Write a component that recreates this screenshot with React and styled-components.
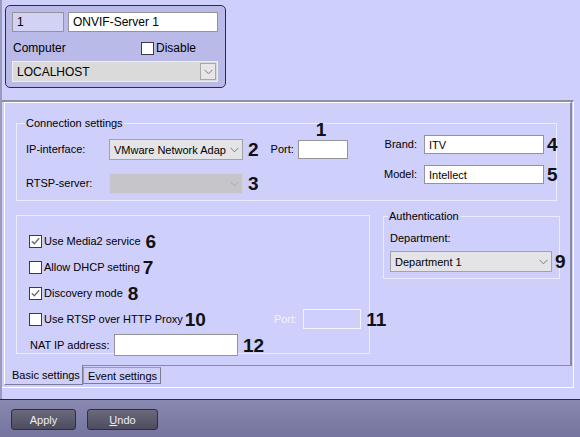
import React from "react";
import styled, { createGlobalStyle } from "styled-components";

const GlobalStyle = createGlobalStyle`
  html, body { margin: 0; padding: 0; }
  body {
    background: #cfcffb;
    font-family: "Liberation Sans", Arial, sans-serif;
    font-size: 11px;
    color: #000;
  }
  * { box-sizing: border-box; }
`;

const Screen = styled.div`
  width: 580px;
  height: 437px;
  display: flex;
  flex-direction: column;
  overflow: hidden;
`;

const Upper = styled.div`
  flex: 1;
  border-left: 2px solid #9a9abc;
`;

const Header = styled.div`
  height: 100px;
  padding: 5px 0 0 3px;
`;

const ObjectPanel = styled.div`
  width: 221px;
  height: 83px;
  border: 1px solid #2c2c44;
  border-radius: 5px;
  background: #babae8;
  padding: 6px 0 0 6px;
`;

const Row = styled.div`
  display: flex;
  align-items: center;
  height: ${(p) => p.h || 21}px;
  margin-top: ${(p) => p.mt || 0}px;
  flex: none;
`;

const TextBox = styled.div`
  flex: none;
  width: ${(p) => p.w}px;
  height: ${(p) => p.h || 19}px;
  margin-left: ${(p) => p.ml || 0}px;
  background: ${(p) => (p.tint ? "#d2d2f4" : p.off ? "transparent" : "#fff")};
  border: 1px solid ${(p) => (p.off ? "#f4f4ff" : "#949498")};
  padding: 0 4px;
  display: flex;
  align-items: center;
  white-space: nowrap;
  overflow: hidden;
  font-size: ${(p) => (p.big ? 12 : 11)}px;
`;

const Label = styled.div`
  flex: none;
  width: ${(p) => (p.w ? `${p.w}px` : "auto")};
  margin-left: ${(p) => p.ml || 0}px;
  text-align: ${(p) => (p.right ? "right" : "left")};
  white-space: nowrap;
  line-height: 13px;
  font-size: ${(p) => (p.big ? 12 : 11)}px;
  color: ${(p) => (p.off ? "#f2f2fc" : "#000")};
`;

const Num = styled.div`
  flex: none;
  margin-left: ${(p) => p.ml || 0}px;
  font-size: 19px;
  font-weight: bold;
  line-height: 19px;
  color: #111;
`;

const FloatNum = styled(Num)`
  position: absolute;
  top: -20px;
  left: 18px;
`;

const Anchor = styled.div`
  position: relative;
  flex: none;
  margin-left: ${(p) => p.ml || 0}px;
`;

const ComboBox = styled.div`
  flex: none;
  width: ${(p) => p.w}px;
  height: 21px;
  margin-left: ${(p) => p.ml || 0}px;
  background: ${(p) => (p.off ? "#c6c6ca" : p.host ? "#dadada" : "#e4e4e6")};
  border: 1px solid ${(p) => (p.off ? "#d2d2d6" : p.host ? "#eeeeee" : "#a2a2a6")};
  display: flex;
  align-items: center;
  padding-left: 4px;
  white-space: nowrap;
  font-size: ${(p) => (p.host ? 12 : 11)}px;
`;

const ComboText = styled.div`
  flex: 1;
  overflow: hidden;
`;

const DropButton = styled.div`
  flex: none;
  width: ${(p) => (p.boxed ? 16 : 14)}px;
  height: ${(p) => (p.boxed ? 17 : 19)}px;
  margin-right: 1px;
  display: flex;
  align-items: center;
  justify-content: center;
  background: ${(p) => (p.boxed ? "#e6e6e6" : "transparent")};
  border: ${(p) => (p.boxed ? "1px solid #a8a8a8" : "none")};
`;

function Chevron({ color = "#7a7a7a" }) {
  return (
    <svg width="9" height="6" viewBox="0 0 9 6">
      <polyline points="0.5,0.8 4.5,4.8 8.5,0.8" fill="none" stroke={color} strokeWidth="1" />
    </svg>
  );
}

function Combo({ children, w, ml, off, host }) {
  return (
    <ComboBox w={w} ml={ml} off={off} host={host}>
      <ComboText>{children}</ComboText>
      <DropButton boxed={host}>
        <Chevron color={off ? "#a8a8ac" : "#7a7a7a"} />
      </DropButton>
    </ComboBox>
  );
}

const Box = styled.div`
  flex: none;
  width: 13px;
  height: 13px;
  background: #fff;
  border: 1px solid #3a3a48;
  margin-right: ${(p) => p.mr || 2}px;
  display: flex;
  align-items: center;
  justify-content: center;
`;

function Check({ on, mr }) {
  return (
    <Box mr={mr}>
      {on && (
        <svg width="11" height="11" viewBox="0 0 11 11">
          <polyline points="1.8,5.2 4.3,7.8 9.2,2.2" fill="none" stroke="#6e6e76" strokeWidth="1.4" />
        </svg>
      )}
    </Box>
  );
}

const Frame = styled.div`
  width: 572px;
  height: 288px;
  border-top: 2px solid #8e8eaa;
  border-right: 1px solid #fff;
  border-bottom: 1px solid #fff;
  padding-left: 2px;
  display: flex;
  flex-direction: column;
`;

const TabPage = styled.div`
  width: 568px;
  height: 264px;
  flex: none;
  border-top: 1px solid #fff;
  border-left: 1px solid #fff;
  border-right: 2px solid #8a8aa2;
  border-bottom: 1px solid #8a8aa2;
  padding: 20px 0 0 11px;
`;

const Group = styled.div`
  position: relative;
  flex: none;
  width: ${(p) => p.w}px;
  height: ${(p) => p.h}px;
  margin-top: ${(p) => p.mt || 0}px;
  margin-left: ${(p) => p.ml || 0}px;
  border: 1px solid #ececff;
  padding: ${(p) => p.pad};
  display: flex;
  flex-direction: ${(p) => (p.col ? "column" : "row")};
`;

const GroupTitle = styled.div`
  position: absolute;
  top: -7px;
  left: ${(p) => p.left}px;
  padding: 0 1px;
  line-height: 13px;
  background: #cfcffb;
  white-space: nowrap;
`;

const Column = styled.div`
  flex: none;
  display: flex;
  flex-direction: column;
  width: ${(p) => (p.w ? `${p.w}px` : "auto")};
  margin-left: ${(p) => p.ml || 0}px;
`;

const BottomRow = styled.div`
  display: flex;
  align-items: flex-start;
  margin-top: 14px;
`;

const CheckRow = styled.div`
  display: flex;
  align-items: center;
  height: 26px;
  flex: none;
`;

const TabStrip = styled.div`
  display: flex;
  align-items: flex-start;
  height: 21px;
`;

const Tab = styled.div`
  flex: none;
  width: ${(p) => p.w}px;
  height: ${(p) => (p.active ? 20 : 17)}px;
  margin-top: ${(p) => (p.active ? -1 : 1)}px;
  background: #cfcffb;
  border-left: 1px solid ${(p) => (p.active ? "#fff" : "#9a9ab4")};
  border-right: 1px solid #7c7c94;
  border-bottom: 1px solid #7c7c94;
  border-top: ${(p) => (p.active ? "none" : "1px solid #9a9ab4")};
  padding-left: ${(p) => (p.active ? 7 : 4)}px;
  display: flex;
  align-items: center;
  white-space: nowrap;
`;

const BottomBar = styled.div`
  flex: none;
  height: 38px;
  border-top: 1px solid #2a2a3a;
  background: linear-gradient(#8888b0, #74749e);
  display: flex;
  gap: 11px;
  padding: 9px 0 0 11px;
`;

const Button = styled.button`
  width: ${(p) => p.w}px;
  height: 21px;
  border: 1px solid #2e2e3e;
  border-radius: 3px;
  background: linear-gradient(#6a6a7c, #4c4c5e);
  color: #eeeef6;
  font-family: "Liberation Sans", Arial, sans-serif;
  font-size: 11px;
  padding: 0;
  u { text-decoration: underline; }
`;

export default function App() {
  return (
    <Screen>
      <GlobalStyle />
      <Upper>
        <Header>
          <ObjectPanel>
            <Row h={20}>
              <TextBox w={52} h={20} tint big>1</TextBox>
              <TextBox w={150} h={20} ml={4} big>ONVIF-Server 1</TextBox>
            </Row>
            <Row h={13} mt={10}>
              <Label w={128} ml={1} big>Computer</Label>
              <Check />
              <Label big>Disable</Label>
            </Row>
            <Row mt={6}>
              <Combo w={206} host>LOCALHOST</Combo>
            </Row>
          </ObjectPanel>
        </Header>

        <Frame>
          <TabPage>
            <Group w={541} h={78} pad="0 0 0 9px">
              <GroupTitle left={8}>Connection settings</GroupTitle>
              <Column w={323}>
                <Row mt={15}>
                  <Label w={83}>IP-interface:</Label>
                  <Combo w={134}>VMware Network Adap</Combo>
                  <Num ml={5}>2</Num>
                  <Label ml={12}>Port:</Label>
                  <Anchor ml={4}>
                    <FloatNum>1</FloatNum>
                    <TextBox w={50} />
                  </Anchor>
                </Row>
                <Row mt={13}>
                  <Label w={83}>RTSP-server:</Label>
                  <Combo w={134} off />
                  <Num ml={5}>3</Num>
                </Row>
              </Column>
              <Column ml={34}>
                <Row h={19} mt={11}>
                  <Label w={34} right>Brand:</Label>
                  <TextBox w={120} ml={7}>ITV</TextBox>
                  <Num ml={3}>4</Num>
                </Row>
                <Row h={19} mt={11}>
                  <Label w={34} right>Model:</Label>
                  <TextBox w={120} ml={7}>Intellect</TextBox>
                  <Num ml={3}>5</Num>
                </Row>
              </Column>
            </Group>

            <BottomRow>
              <Group w={354} h={139} pad="12px 0 0 12px" col>
                <CheckRow>
                  <Check on />
                  <Label>Use Media2 service</Label>
                  <Num ml={5}>6</Num>
                </CheckRow>
                <CheckRow>
                  <Check />
                  <Label>Allow DHCP setting</Label>
                  <Num ml={3}>7</Num>
                </CheckRow>
                <CheckRow>
                  <Check on />
                  <Label>Discovery mode</Label>
                  <Num ml={5}>8</Num>
                </CheckRow>
                <CheckRow>
                  <Check />
                  <Label>Use RTSP over HTTP Proxy</Label>
                  <Num ml={2}>10</Num>
                  <Label off ml={68}>Port:</Label>
                  <TextBox w={58} h={20} ml={6} off />
                  <Num ml={5}>11</Num>
                </CheckRow>
                <CheckRow>
                  <Label w={84} ml={1}>NAT IP address:</Label>
                  <TextBox w={124} h={22} />
                  <Num ml={5}>12</Num>
                </CheckRow>
              </Group>

              <Group w={177} h={63} mt={1} ml={13} pad="15px 0 0 6px" col>
                <GroupTitle left={4}>Authentication</GroupTitle>
                <Label>Department:</Label>
                <Row mt={6}>
                  <Combo w={162}>Department 1</Combo>
                  <Num ml={3}>9</Num>
                </Row>
              </Group>
            </BottomRow>
          </TabPage>
          <TabStrip>
            <Tab w={79} active>Basic settings</Tab>
            <Tab w={78}>Event settings</Tab>
          </TabStrip>
        </Frame>
      </Upper>
      <BottomBar>
        <Button w={65}>Apply</Button>
        <Button w={71}>
          <u>U</u>ndo
        </Button>
      </BottomBar>
    </Screen>
  );
}
